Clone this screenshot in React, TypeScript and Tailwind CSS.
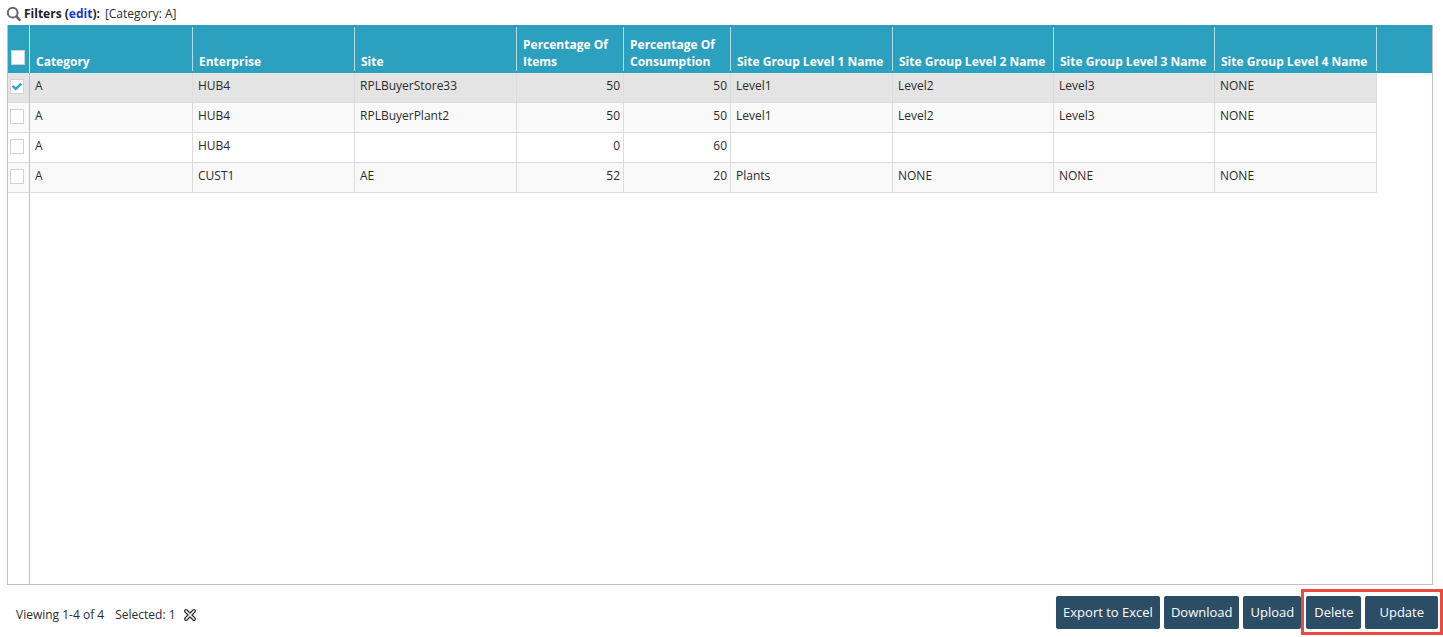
import React, { useState } from "react";

type Row = {
  category: string;
  enterprise: string;
  site: string;
  items: number;
  consumption: number;
  level1: string;
  level2: string;
  level3: string;
  level4: string;
};

const columns: { key: keyof Row; label: string; width: string; numeric?: boolean }[] = [
  { key: "category", label: "Category", width: "w-[163px]" },
  { key: "enterprise", label: "Enterprise", width: "w-[162px]" },
  { key: "site", label: "Site", width: "w-[162px]" },
  { key: "items", label: "Percentage Of Items", width: "w-[107px]", numeric: true },
  { key: "consumption", label: "Percentage Of Consumption", width: "w-[107px]", numeric: true },
  { key: "level1", label: "Site Group Level 1 Name", width: "w-[162px]" },
  { key: "level2", label: "Site Group Level 2 Name", width: "w-[161px]" },
  { key: "level3", label: "Site Group Level 3 Name", width: "w-[161px]" },
  { key: "level4", label: "Site Group Level 4 Name", width: "w-[162px]" },
];

const rows: Row[] = [
  { category: "A", enterprise: "HUB4", site: "RPLBuyerStore33", items: 50, consumption: 50, level1: "Level1", level2: "Level2", level3: "Level3", level4: "NONE" },
  { category: "A", enterprise: "HUB4", site: "RPLBuyerPlant2", items: 50, consumption: 50, level1: "Level1", level2: "Level2", level3: "Level3", level4: "NONE" },
  { category: "A", enterprise: "HUB4", site: "", items: 0, consumption: 60, level1: "", level2: "", level3: "", level4: "" },
  { category: "A", enterprise: "CUST1", site: "AE", items: 52, consumption: 20, level1: "Plants", level2: "NONE", level3: "NONE", level4: "NONE" },
];

function SearchIcon() {
  return (
    <svg viewBox="0 0 16 16" className="w-4 h-4 shrink-0" fill="none" stroke="#666" aria-hidden="true">
      <circle cx="6.7" cy="6.7" r="4.9" strokeWidth="2" />
      <path d="M10.4 10.4L13.6 13.8" strokeWidth="2.6" strokeLinecap="round" />
    </svg>
  );
}

function ClearIcon() {
  return (
    <svg viewBox="0 0 14 14" className="w-3.5 h-3.5" strokeLinecap="round" aria-hidden="true">
      <path d="M3 3L11 11M11 3L3 11" stroke="#333" strokeWidth="4" />
      <path d="M3 3L11 11M11 3L3 11" stroke="#eee" strokeWidth="1.7" />
    </svg>
  );
}

function Checkbox({ label, checked, onChange }: { label: string; checked: boolean; onChange: () => void }) {
  return (
    <span className="grid w-3.5 h-[15px]">
      <input
        type="checkbox"
        aria-label={label}
        checked={checked}
        onChange={onChange}
        className="col-start-1 row-start-1 appearance-none w-3.5 h-[15px] bg-white border border-[#d2d2d2]"
      />
      {checked && (
        <svg viewBox="0 0 14 14" className="col-start-1 row-start-1 w-3.5 h-3.5 pointer-events-none" fill="none">
          <path d="M2.5 6.8L5.8 9.9L11.3 4.6" stroke="#2ea2cc" strokeWidth="2.4" />
        </svg>
      )}
    </span>
  );
}

function ActionButton({ children, className = "px-[7px]" }: { children: React.ReactNode; className?: string }) {
  return (
    <button className={`h-[33px] pt-0.5 rounded-[2px] bg-[#2c4d66] text-white text-[13px] whitespace-nowrap ${className}`}>
      {children}
    </button>
  );
}

export default function App() {
  const [selected, setSelected] = useState<number[]>([0]);

  const toggle = (idx: number) =>
    setSelected(selected.includes(idx) ? selected.filter((i) => i !== idx) : [...selected, idx]);

  const toggleAll = () => setSelected(selected.length === rows.length ? [] : rows.map((_, i) => i));

  return (
    <div className="min-h-screen flex flex-col bg-white text-[#2b2b2b] text-[12px] font-['Open_Sans','Noto_Sans',sans-serif]">
      {/* Filters */}
      <div className="h-[25px] pl-[6px] pt-0.5 flex items-center">
        <SearchIcon />
        <span className="ml-0.5 font-bold text-[#222]">
          Filters (
          <a href="#edit" className="text-[#1438d0]">
            edit
          </a>
          ):
        </span>
        <span className="ml-[5px]">[Category: A]</span>
      </div>

      {/* Grid */}
      <div className="flex-1 flex flex-col ml-[7px] mr-[10px] border-x border-b border-[#bfbfd0]">
        <table className="w-full table-fixed border-separate border-spacing-0">
          <thead>
            <tr className="h-12 bg-[#2ca1bf] text-white">
              <th className="w-[22px] p-0 border-r border-[#d5e6ee] align-bottom">
                <div className="flex pl-[3px] pb-2">
                  <Checkbox label="Select all" checked={selected.length === rows.length} onChange={toggleAll} />
                </div>
              </th>
              {columns.map((col) => (
                <th key={col.key} className={`${col.width} p-0 py-0.5 text-left font-bold`}>
                  <div className="h-11 pl-[6px] pb-px border-r border-[#b5dde7] flex items-end leading-[17px]">
                    <span className={col.numeric ? "w-[90px]" : "whitespace-nowrap"}>{col.label}</span>
                  </div>
                </th>
              ))}
              <th className="p-0" />
            </tr>
          </thead>
          <tbody>
            {rows.map((row, idx) => {
              const isSelected = selected.includes(idx);
              const stripe = idx === 2 ? "bg-white" : "bg-[#f9f9f9]";
              const tone = `${isSelected ? "bg-[#e4e4e4]" : stripe} border-b border-[#dcdcdc]`;

              return (
                <tr key={idx} className="h-[30px]">
                  <td className={`${tone} p-0 pb-0.5 border-r border-r-[#bfbfd0]`}>
                    <div className="flex pl-0.5">
                      <Checkbox label={`Select row ${idx + 1}`} checked={isSelected} onChange={() => toggle(idx)} />
                    </div>
                  </td>
                  {columns.map((col) => (
                    <td
                      key={col.key}
                      className={`${tone} p-0 pb-1 border-r ${col.numeric ? "pr-[3px] text-right" : "pl-[5px]"}`}
                    >
                      {row[col.key]}
                    </td>
                  ))}
                  <td className="p-0" />
                </tr>
              );
            })}
          </tbody>
        </table>
        <div className="flex-1 w-[22px] border-r border-[#bfbfd0]" />
      </div>

      {/* Footer */}
      <div className="h-[52px] pl-4 flex items-center justify-between">
        <div className="flex items-center pt-2">
          <span>Viewing 1-4 of 4</span>
          <span className="ml-[11px]">Selected: {selected.length}</span>
          <button aria-label="Clear selection" className="ml-[7px]" onClick={() => setSelected([])}>
            <ClearIcon />
          </button>
        </div>
        <div className="flex items-center pt-0.5">
          <ActionButton>Export to Excel</ActionButton>
          <ActionButton className="ml-1 px-[7px]">Download</ActionButton>
          <ActionButton className="ml-1 px-[7px]">Upload</ActionButton>
          <div className="flex items-center gap-1 h-[46px] px-0.5 border-3 border-[#ea4a42]">
            <ActionButton className="px-2">Delete</ActionButton>
            <ActionButton className="px-[14px]">Update</ActionButton>
          </div>
        </div>
      </div>
    </div>
  );
}
